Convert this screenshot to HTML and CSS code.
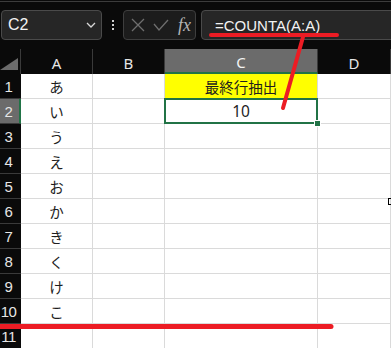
FILE: index.html
```html
<!DOCTYPE html>
<html lang="ja">
<head>
    <meta charset="UTF-8">
    <title>最終行抽出</title>
    <link rel="stylesheet" href="styles.css">
</head>
<body>
    <div class="toolbar">
        <div class="namebox">
            <span>C2</span>
            <svg width="10" height="6" viewBox="0 0 10 6"><path d="M1 1 L5 5 L9 1" fill="none" stroke="#d8d8d8" stroke-width="1.3"/></svg>
        </div>
        <div class="dots"><i></i><i></i><i></i></div>
        <div class="fnbox">
            <svg width="14" height="14" viewBox="0 0 14 14"><path d="M1 1 L13 13 M13 1 L1 13" stroke="#6e6e6e" stroke-width="1.3"/></svg>
            <svg width="16" height="12" viewBox="0 0 16 12"><path d="M1 5 L6 11 L15 1" fill="none" stroke="#6e6e6e" stroke-width="1.3"/></svg>
            <span class="fx">fx</span>
        </div>
        <div class="formula">=COUNTA(A:A)</div>
    </div>

    <div class="sheet">
        <div class="corner">
            <svg width="18" height="12" viewBox="0 0 18 12"><path d="M18 0 L18 12 L0 12 Z" fill="#6b6b6b"/></svg>
        </div>
        <div class="colhead">A</div>
        <div class="colhead">B</div>
        <div class="colhead sel">C</div>
        <div class="colhead">D</div>

        <div class="rowhead"><span>1</span></div>
        <div class="cell">あ</div><div class="cell"></div><div class="cell title">最終行抽出</div><div class="cell"></div>
        <div class="rowhead sel"><span>2</span></div>
        <div class="cell">い</div><div class="cell"></div><div class="cell active">10</div><div class="cell"></div>
        <div class="rowhead"><span>3</span></div>
        <div class="cell">う</div><div class="cell"></div><div class="cell"></div><div class="cell"></div>
        <div class="rowhead"><span>4</span></div>
        <div class="cell">え</div><div class="cell"></div><div class="cell"></div><div class="cell"></div>
        <div class="rowhead"><span>5</span></div>
        <div class="cell">お</div><div class="cell"></div><div class="cell"></div><div class="cell"></div>
        <div class="rowhead"><span>6</span></div>
        <div class="cell">か</div><div class="cell"></div><div class="cell"></div><div class="cell"></div>
        <div class="rowhead"><span>7</span></div>
        <div class="cell">き</div><div class="cell"></div><div class="cell"></div><div class="cell"></div>
        <div class="rowhead"><span>8</span></div>
        <div class="cell">く</div><div class="cell"></div><div class="cell"></div><div class="cell"></div>
        <div class="rowhead"><span>9</span></div>
        <div class="cell">け</div><div class="cell"></div><div class="cell"></div><div class="cell"></div>
        <div class="rowhead"><span>10</span></div>
        <div class="cell">こ</div><div class="cell"></div><div class="cell"></div><div class="cell"></div>
        <div class="rowhead"><span>11</span></div>
        <div class="cell"></div><div class="cell"></div><div class="cell"></div><div class="cell"></div>
    </div>

    <span class="cursor"></span>

    <svg class="marks" width="391" height="348" viewBox="0 0 391 348">
        <g stroke="#ec1c24" stroke-linecap="round" fill="none">
            <line x1="211" y1="35" x2="337" y2="35" stroke-width="4"/>
            <line x1="303" y1="37" x2="283" y2="108" stroke-width="4"/>
            <line x1="-3" y1="326.5" x2="331" y2="326.5" stroke-width="5"/>
        </g>
    </svg>
</body>
</html>
```

FILE: styles.css
```css
html, body {
    margin: 0;
    padding: 0;
}
body {
    position: relative;
    width: 391px;
    height: 348px;
    overflow: hidden;
    background-color: #0a0a0a;
    font-family: "Noto Sans", "Noto Sans CJK JP", sans-serif;
}
.toolbar {
    box-sizing: border-box;
    height: 48px;
    margin-top: 1px;
    border-top: 1px solid #3c3c3c;
    padding: 8px 0 0 1px;
    display: flex;
    align-items: flex-start;
}
.namebox {
    box-sizing: border-box;
    width: 101px;
    height: 30px;
    padding: 0 5px 0 6px;
    border: 1px solid #4a4a4a;
    border-radius: 4px;
    background-color: #262626;
    display: flex;
    align-items: center;
    justify-content: space-between;
    color: #f2f2f2;
    font-family: "Liberation Sans", sans-serif;
    font-size: 16px;
}
.dots {
    margin-left: 10px;
    height: 30px;
    display: flex;
    flex-direction: column;
    justify-content: center;
    gap: 2px;
}
.dots i {
    display: block;
    width: 2px;
    height: 2px;
    background-color: #d0d0d0;
}
.fnbox {
    box-sizing: border-box;
    width: 73px;
    height: 30px;
    margin-left: 9px;
    padding-left: 7px;
    border: 1px solid #3e3e3e;
    border-radius: 4px;
    background-color: #1c1c1c;
    display: flex;
    align-items: center;
    gap: 8px;
}
.fx {
    font-family: "Liberation Serif", serif;
    font-style: italic;
    font-size: 18px;
    color: #b4b4b4;
    margin-left: 1px;
}
.formula {
    box-sizing: border-box;
    flex: 1;
    height: 30px;
    margin-left: 5px;
    margin-right: -6px;
    padding-left: 13px;
    border: 1px solid #4a4a4a;
    border-radius: 4px;
    background-color: #262626;
    display: flex;
    align-items: center;
    color: #f2f2f2;
    font-family: "Liberation Sans", sans-serif;
    font-size: 15px;
}
.sheet {
    display: grid;
    grid-template-columns: 21px 72px 72px 153px 73px;
    grid-auto-rows: 25px;
    background-color: #ffffff;
}
.sheet > div {
    box-sizing: border-box;
    display: flex;
    align-items: center;
    justify-content: center;
}
.corner {
    background-color: #0a0a0a;
    border-right: 1px solid #3a3a3a;
    align-items: flex-end !important;
    justify-content: flex-end !important;
    padding: 0 2px 4px 0;
}
.colhead {
    background-color: #0a0a0a;
    border-right: 1px solid #3a3a3a;
    color: #e6e6e6;
    font-size: 15px;
    padding-top: 2px;
}
.colhead.sel {
    background-color: #6b6b6b;
    border-bottom: 2px solid #217346;
    color: #f4f4f4;
}
.rowhead {
    background-color: #0a0a0a;
    border-bottom: 1px solid #3a3a3a;
    color: #e6e6e6;
    font-family: "Liberation Sans", sans-serif;
    font-size: 15px;
    justify-content: flex-start !important;
}
.rowhead span {
    width: 15px;
    padding-left: 1px;
    display: flex;
    justify-content: center;
    letter-spacing: -0.5px;
    white-space: nowrap;
}
.rowhead.sel {
    background-color: #6b6b6b;
    border-right: 2px solid #217346;
}
.cell {
    background-color: #ffffff;
    border-right: 1px solid #dadada;
    border-bottom: 1px solid #dadada;
    color: #1e1e1e;
    font-family: "Noto Sans CJK JP", sans-serif;
    font-size: 14.5px;
}
.cell.title {
    background-color: #ffff00;
}
.cell.active {
    position: relative;
    font-family: "Noto Sans", sans-serif;
    font-size: 15.5px;
}
.cell.active::after {
    content: "";
    position: absolute;
    top: -1px;
    left: -1px;
    right: -1px;
    bottom: -1px;
    border: 2px solid #217346;
}
.cell.active::before {
    content: "";
    position: absolute;
    right: -4px;
    bottom: -4px;
    width: 5px;
    height: 5px;
    background-color: #217346;
    border: 1px solid #ffffff;
    z-index: 1;
}
.cursor {
    position: absolute;
    left: 388px;
    top: 198px;
    width: 3px;
    height: 5px;
    border: 1px solid #000;
    border-right: none;
}
.marks {
    position: absolute;
    top: 0;
    left: 0;
    pointer-events: none;
}
```
